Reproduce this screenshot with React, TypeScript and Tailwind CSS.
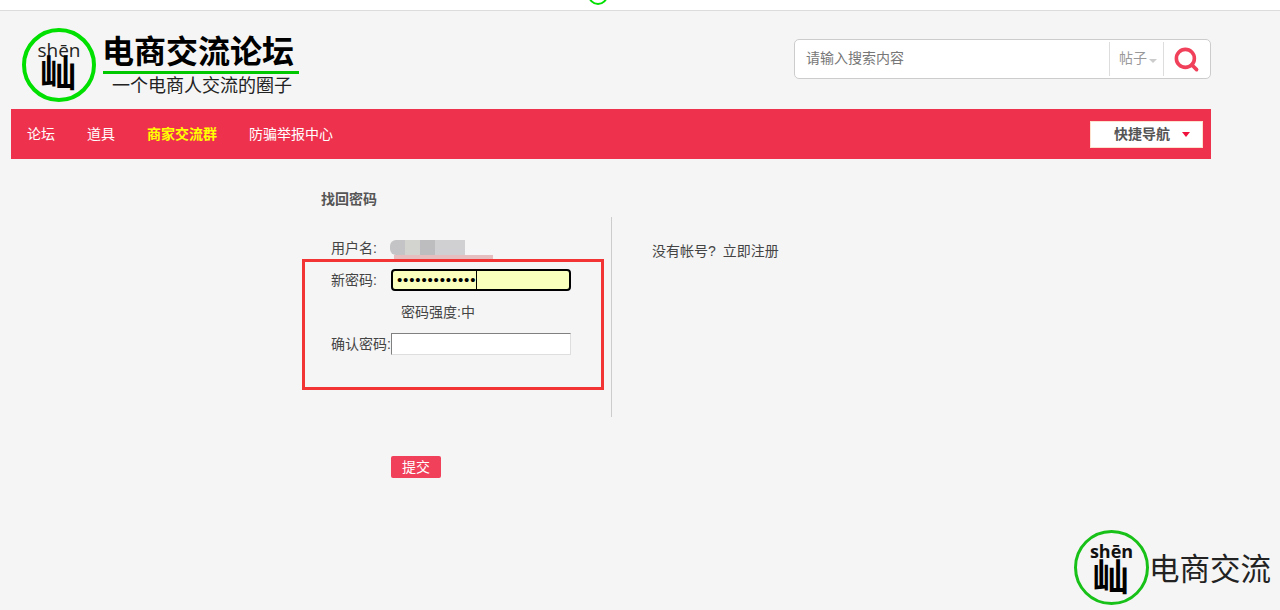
import { Search } from "lucide-react";

const cjk = "font-['Liberation_Sans','Noto_Sans_CJK_SC',sans-serif]";

function Logo({ small }: { small?: boolean }) {
    return (
        <div className={`flex flex-col items-center rounded-full bg-[#f5f5f5] shrink-0 ${small ? "size-[75px] border-[3px] border-[#17c117] pt-[8px]" : "size-[74px] border-4 border-[#00e000] pt-[8px]"}`}>
            <span className={`font-['Open_Sans',sans-serif] leading-[20px] ${small ? "text-[18px] font-bold text-[#111]" : "text-[19px] text-[#222]"}`}>shēn</span>
            <span className={`-ml-[2px] font-bold text-black ${small ? "text-[37px] leading-[36px]" : "text-[37px] leading-[30px]"}`}>屾</span>
        </div>
    );
}

function Field({ label, children }: { label: string; children: React.ReactNode }) {
    return (
        <div className="flex h-[22px] items-center">
            <span className="w-[60px] shrink-0 text-[14px] text-[#444]">{label}</span>
            {children}
        </div>
    );
}

export default function App() {
    return (
        <div className={`relative h-[610px] w-[1280px] overflow-hidden bg-[#f5f5f5] ${cjk}`}>
            <div className="flex h-[11px] justify-center overflow-hidden border-b border-[#dcdcdc] bg-white pr-[84px]">
                <div className="-mt-[15px] size-[20px] shrink-0 rounded-full border-2 border-[#00e000]" />
            </div>

            <div className="w-[1200px] ml-[11px]">
                <div className="flex h-[98px] justify-between">
                    <div className="flex pl-[11px] pt-[17px]">
                        <Logo />
                        <div className="ml-[7px] flex w-[196px] flex-col">
                            <div className="-ml-[1px] h-[43px] pt-[7px] text-[32px] leading-[34px] font-bold text-black">电商交流论坛</div>
                            <div className="h-[3px] bg-[#00c800]" />
                            <div className="pl-[9px] pt-[1px] text-[18px] leading-[22px] text-[#222]">一个电商人交流的圈子</div>
                        </div>
                    </div>

                    <div className="mt-[28px] flex h-[40px] w-[417px] items-center rounded-[5px] border border-[#ccc] bg-white">
                        <span className="mb-[2px] ml-[11px] w-[303px] text-[14px] text-[#777]">请输入搜索内容</span>
                        <div className="flex h-[34px] w-[55px] items-center border-x border-[#ddd] pb-[2px] pl-[9px] text-[14px] text-[#999]">
                            帖子
                            <span className="mt-[5px] ml-[2px] size-0 border-x-[4px] border-t-[4px] border-x-transparent border-t-[#ccc]" />
                        </div>
                        <Search className="ml-[9px] text-[#f0405a]" size={27} strokeWidth={3.2} />
                    </div>
                </div>

                <div className="flex h-[50px] items-center justify-between bg-[#ee324e] pl-[16px] pr-[8px]">
                    <div className="flex gap-[32px] text-[14px] text-white">
                        <span>论坛</span>
                        <span>道具</span>
                        <span className="font-bold text-[#ffff00]">商家交流群</span>
                        <span>防骗举报中心</span>
                    </div>
                    <div className="flex h-[27px] w-[113px] items-center border border-[#fde3cf] bg-white pl-[23px] text-[14px] font-bold text-[#555]">
                        快捷导航
                        <span className="ml-[12px] mt-[1px] size-0 border-x-[4px] border-t-[5px] border-x-transparent border-t-[#f0123c]" />
                    </div>
                </div>
            </div>

            <div className="ml-[321px] mt-[31px]">
                <h2 className="text-[14px] leading-[18px] font-bold text-[#555]">找回密码</h2>

                <div className="mt-[9px] flex">
                    <div className="flex h-[200px] w-[291px] flex-col gap-[10px] border-r border-[#ccc] pl-[10px] pt-[20px]">
                        <Field label="用户名:">
                            <div className="-ml-[1px] flex h-[22px] flex-col pt-[3px]">
                                <div className="flex h-[15px]">
                                    <div className="w-[15px] rounded-l-[6px] bg-[#c4c3c5]" />
                                    <div className="w-[15px] bg-[#d3d4d0]" />
                                    <div className="w-[15px] bg-[#bdbcbe]" />
                                    <div className="w-[30px] bg-[#d0cfd1]" />
                                </div>
                                <div className="ml-[4px] h-[4px] w-[99px] bg-[#e5bfbf]" />
                            </div>
                        </Field>
                        <Field label="新密码:">
                            <div className="flex h-[22px] w-[180px] items-center rounded-[4px] border-2 border-black bg-[#fbffbd] pl-[4px]">
                                <span className="text-[15px] leading-[18px] tracking-[0.85px] text-black">•••••••••••••</span>
                                <span className="h-[18px] w-px bg-black" />
                            </div>
                        </Field>
                        <div className="h-[22px] pl-[70px] text-[14px] leading-[22px] text-[#444]">密码强度:中</div>
                        <Field label="确认密码:">
                            <div className="h-[22px] w-[180px] border border-[#dedede] border-t-[#808080] border-l-[#808080] bg-white" />
                        </Field>
                    </div>
                    <div className="pl-[40px] pt-[25px] text-[14px] leading-[18px] text-[#444]">
                        没有帐号? <span className="ml-[3px]">立即注册</span>
                    </div>
                </div>

                <button className="ml-[70px] mt-[39px] flex h-[22px] w-[50px] items-center justify-center rounded-[2px] bg-[#f0405a] text-[14px] text-white">提交</button>
            </div>

            <div className="absolute left-[302px] top-[259px] h-[131px] w-[302px] border-[3px] border-[#f33434]" />

            <div className="absolute left-[1074px] top-[530px] flex items-center">
                <Logo small />
                <span className="mt-[3px] text-[30.5px] leading-[36px] text-[#222]">电商交流</span>
            </div>
        </div>
    );
}
